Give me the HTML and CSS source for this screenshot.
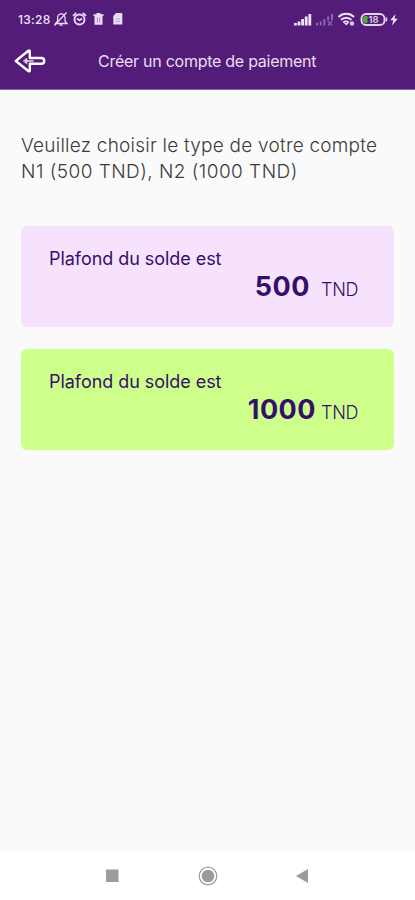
FILE: index.html
```html
<!DOCTYPE html>
<html lang="fr">
<head>
  <meta charset="UTF-8">
  <meta name="viewport" content="width=device-width, initial-scale=1.0">
  <title>Créer un compte de paiement</title>
  <link rel="stylesheet" href="styles.css">
</head>
<body>

  <header>
    <div class="status">
      <span class="time">13:28</span>
      <svg class="status-left" width="72" height="16" viewBox="0 0 72 16" fill="none" stroke="#e9dcf3" stroke-width="1.3">
        <!-- muted bell -->
        <path d="M2.500 12.500h11.500l-2-2.500V6.500a3.700 3.700 0 0 0-7.400 0V10zM6.500 14.200h3M1.500 14.500L13.500 1.500"/>
        <!-- alarm -->
        <circle cx="26.500" cy="8.500" r="5" stroke-width="1.900"/>
        <path d="M24 7.500l2.500 2l2.500-2M20 4.800l3.200-2.800M33 4.800L29.800 2" stroke-width="1.700"/>
        <!-- trash -->
        <path d="M40.500 5h10V3.200h-2.700l-.5-1.200h-3.600l-.5 1.200h-2.700zM41.500 5h8v8.800h-8z" fill="#e9dcf3" stroke="none"/>
        <path d="M44.300 6.500v5M46.700 6.500v5" stroke="#9a75b8" stroke-width=".8"/>
        <!-- sim card -->
        <path d="M63 2h5.500q.8 0 .8.800v10.700h-9V5z" fill="#e9dcf3" stroke="none"/>
        <path d="M62.500 8h4.500M62.500 10.500h4.500" stroke="#bfa6d2" stroke-width="1"/>
      </svg>
      <svg class="status-right" width="106" height="16" viewBox="0 0 106 16" fill="none">
        <g fill="#eee4f5">
          <path d="M1 12h2.800v2.500H1zM4.600 10.500h2.800v4H4.600zM8.200 8h2.800v6.500H8.200zM11.800 5.500h2.800v9h-2.800zM15.400 3h2.800v11.500h-2.800z"/>
        </g>
        <g fill="#8d67ad">
          <path d="M23 12h2v2.500h-2zM26.700 10.500h2v4h-2zM30.400 8h2v6.500h-2zM34.100 5.500h2v4h-2zM38 3h2v6.500h-2z"/>
          <path d="M35 10.500l4 4M39 10.500l-4 4" stroke="#8d67ad" stroke-width="1.200"/>
        </g>
        <g stroke="#eee4f5" stroke-width="2">
          <path d="M45.500 6a11 11 0 0 1 15.500 0M48 8.900a7.200 7.200 0 0 1 10.500 0M50.300 11.600a4 4 0 0 1 5.600 0"/>
        </g>
        <path d="M51 12h4.500l-2.200 2.500z" fill="#eee4f5"/>
        <circle cx="59" cy="12.500" r="2.200" fill="#d8c5e6"/>
        <rect x="68.500" y="3" width="23" height="11" rx="4.500" stroke="#e2d3ed" stroke-width="1.900"/>
        <path d="M72.500 5h2v7h-2a2.500 2.500 0 0 1-2.500-2.500v-2A2.500 2.500 0 0 1 72.500 5z" fill="#4faf3b"/>
        <path d="M92.600 6.500h1.600v4h-1.600z" fill="#e2d3ed"/>
        <text x="75.500" y="12" class="battery">18</text>
        <path d="M102.500 3l-5.200 6.200h3l-1.300 5.200l5.700-6.600h-3.200z" fill="#eee4f5"/>
      </svg>
    </div>
    <div class="toolbar">
      <svg class="back" width="32" height="24" viewBox="0 0 32 24" fill="none" stroke="#fff" stroke-width="2.400" stroke-linejoin="round" stroke-linecap="round">
        <path d="M1.800 12L14.300 1.800c1-.7 1.500-.3 1.500.7V9h11.500a2.900 2.900 0 0 1 0 5.800H15.800v6.600c0 1-.6 1.300-1.500.6z"/>
        <path d="M12.500 9.800L9.800 12l2.700 2.200z" stroke-width="1.600" stroke="#d5c0e4"/>
        <path d="M12 12h7" stroke-width="1.600" stroke="#eadff2"/>
      </svg>
      <h1>Créer un compte de paiement</h1>
    </div>
  </header>

  <main>
    <p class="intro"><span class="line1">Veuillez choisir le type de votre compte</span><br><span class="line2">N1 (500 TND), N2 (1000 TND)</span></p>

    <div class="card lilac">
      <div class="label">Plafond du solde est</div>
      <div class="amount"><b>500</b><span>TND</span></div>
    </div>

    <div class="card green">
      <div class="label">Plafond du solde est</div>
      <div class="amount"><b>1000</b><span>TND</span></div>
    </div>
  </main>

  <nav>
    <svg width="20" height="20" viewBox="0 0 20 20"><path d="M3 3.500H15.500V16H3z" fill="#9c9c9c"/></svg>
    <svg width="20" height="20" viewBox="0 0 20 20"><circle cx="10" cy="10" r="8.800" fill="none" stroke="#a2a2a2" stroke-width="1.300"/><circle cx="10" cy="10" r="6.300" fill="#9c9c9c"/></svg>
    <svg width="20" height="20" viewBox="0 0 20 20"><path d="M15 3v14L3 10z" fill="#9c9c9c"/></svg>
  </nav>

</body>
</html>
```
FILE: styles.css
```css
* {
  box-sizing: border-box;
}

body {
  margin: 0;
  height: 900px;
  display: flex;
  flex-direction: column;
  background: #fafafa;
  font-family: Inter, "Liberation Sans", sans-serif;
  overflow: hidden;
}

header {
  height: 90px;
  background: #531c78;
  border-bottom: 1px solid #8b65a5;
}

.status {
  display: flex;
  height: 38px;
  padding: 11px 16px 0 18px;
  color: #eee4f5;
}

.time {
  width: 35px;
  font-size: 12px;
  line-height: 18px;
  font-weight: 500;
  letter-spacing: 0.3px;
  white-space: nowrap;
}

.status-right {
  margin-left: auto;
}

.battery {
  font-size: 9.5px;
  font-weight: 600;
  fill: #e2d3ed;
}

.toolbar {
  display: flex;
  align-items: center;
  height: 46px;
  padding-left: 14px;
}

h1 {
  margin: 0 0 0 52px;
  font-size: 16px;
  font-weight: 400;
  letter-spacing: -0.26px;
  color: #e9dff0;
  white-space: nowrap;
}

main {
  flex: 1;
  padding: 43px 21px 0;
}

.intro {
  margin: 0 0 41px;
  font-size: 19px;
  line-height: 26px;
  font-weight: 300;
  color: #3c3c3c;
  white-space: nowrap;
}

.line1 {
  letter-spacing: 0.23px;
}

.line2 {
  letter-spacing: 0.46px;
}

.card {
  height: 101px;
  margin-bottom: 22px;
  padding: 20px 36px 0 28px;
  border-radius: 6px;
  color: #35106b;
}

.lilac {
  background: #f6e2fd;
}

.green {
  background: #ceff8b;
}

.label {
  font-size: 18px;
  line-height: 25px;
  letter-spacing: -0.05px;
  white-space: nowrap;
}

.amount {
  display: flex;
  justify-content: flex-end;
  align-items: baseline;
  line-height: 32px;
}

.amount b {
  font-size: 27px;
  font-weight: 700;
  letter-spacing: 0.5px;
}

.amount span {
  width: 37px;
  margin-left: 5px;
  font-size: 18px;
  font-weight: 300;
  letter-spacing: -0.3px;
}

.lilac .amount span {
  margin-left: 11px;
}

nav {
  display: flex;
  justify-content: center;
  gap: 75px;
  height: 48px;
  padding-top: 14px;
  background: #fff;
}
```
